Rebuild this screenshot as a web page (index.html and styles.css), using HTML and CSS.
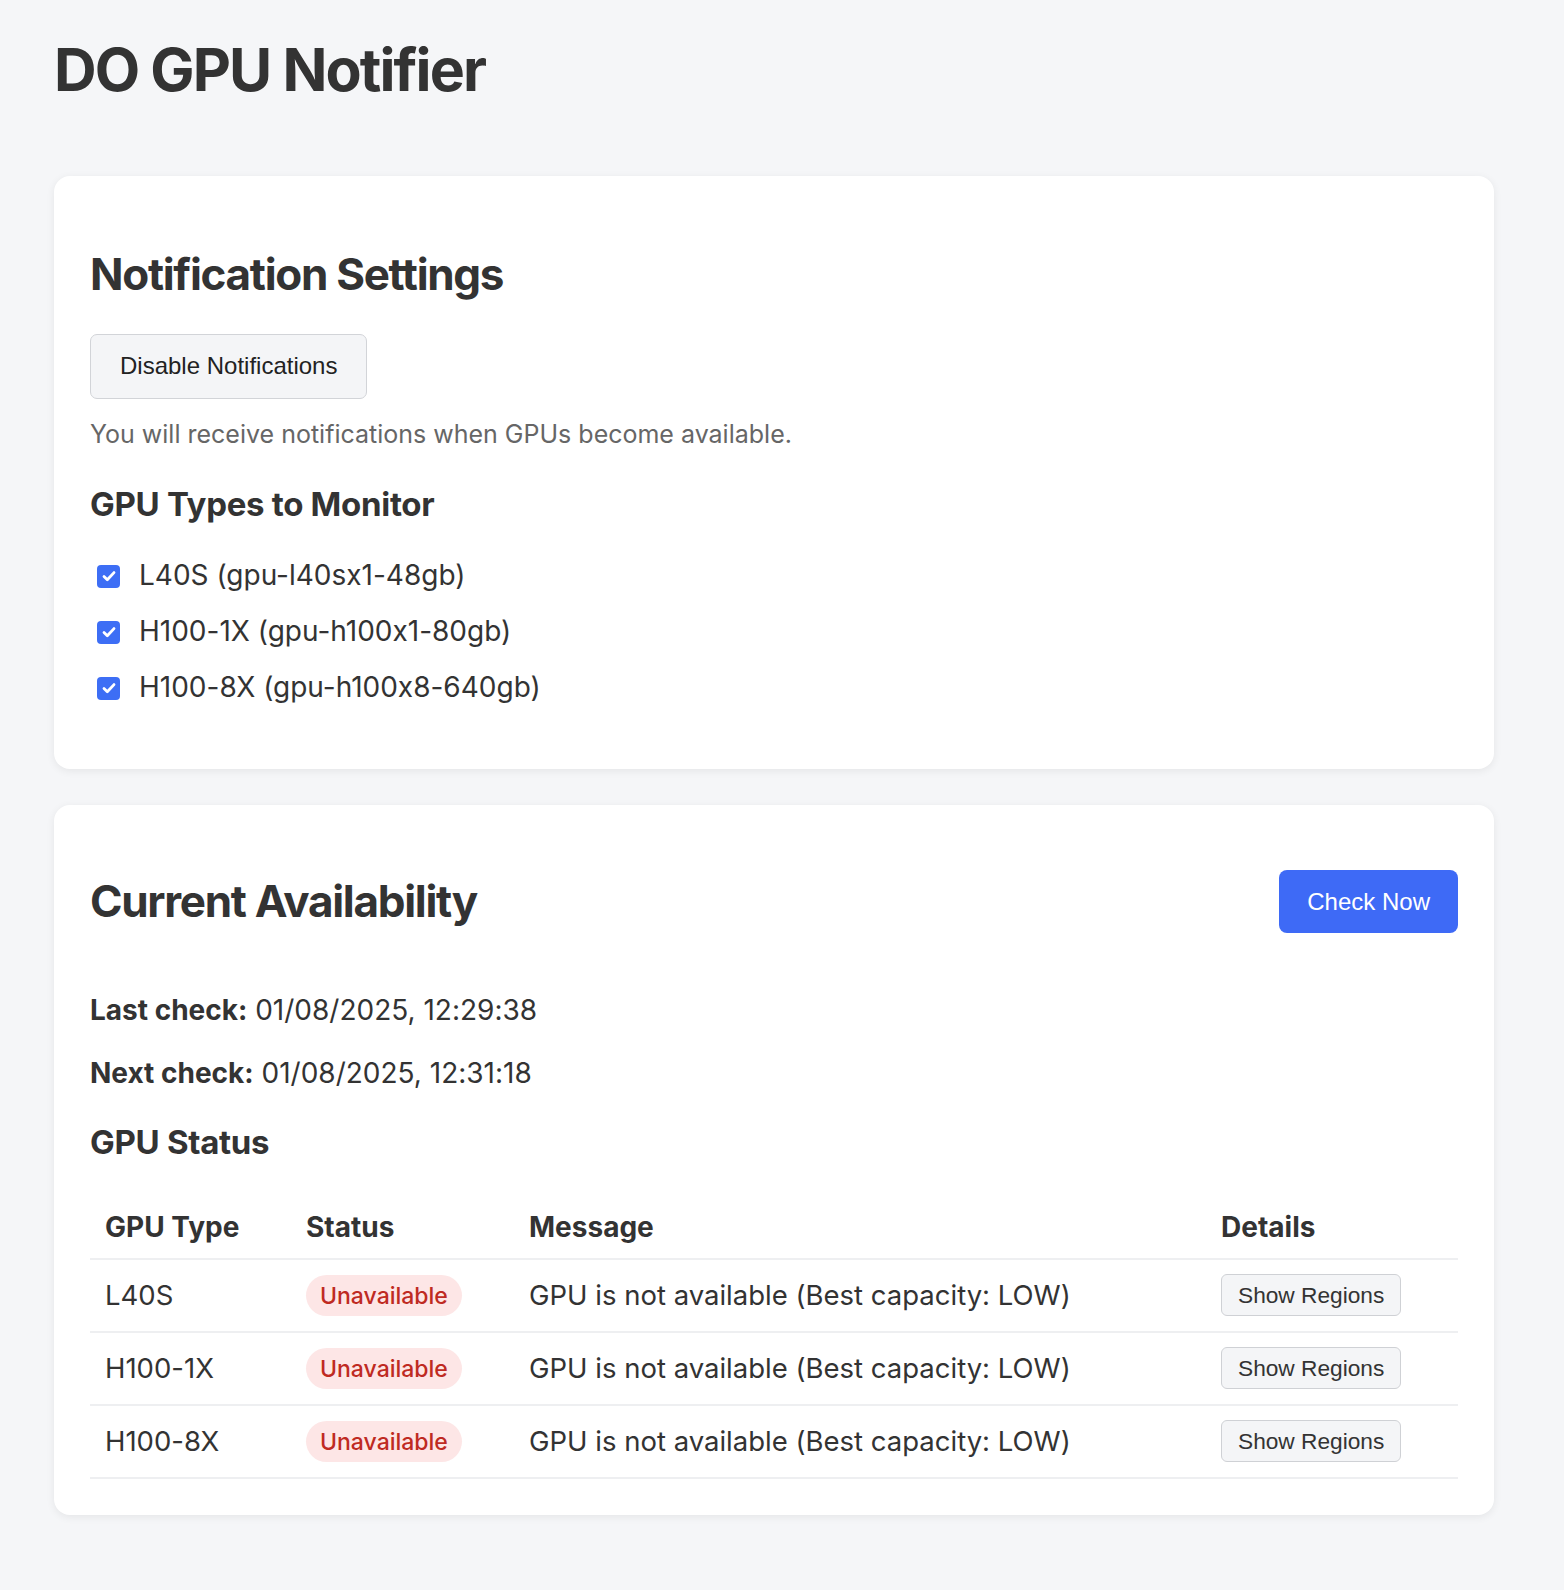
FILE: index.html
```html
<!DOCTYPE html>
<html lang="en">
<head>
<meta charset="utf-8">
<title>DO GPU Notifier</title>
<link rel="stylesheet" href="styles.css">
</head>
<body>
<div class="page">
  <h1 class="title">DO GPU Notifier</h1>

  <section class="card card-settings">
    <h2 class="card-title first">Notification Settings</h2>
    <button class="btn btn-secondary">Disable Notifications</button>
    <p class="hint">You will receive notifications when GPUs become available.</p>
    <h3 class="sub-title">GPU Types to Monitor</h3>
    <ul class="check-list">
      <li class="check-row">
        <span class="checkbox"><svg viewBox="0 0 22 22" width="22" height="22"><path d="M6 11.5l3.3 3.3L16 7.6" fill="none" stroke="#fff" stroke-width="2.8" stroke-linecap="round" stroke-linejoin="round"/></svg></span>
        <span class="check-label">L40S (gpu-l40sx1-48gb)</span>
      </li>
      <li class="check-row">
        <span class="checkbox"><svg viewBox="0 0 22 22" width="22" height="22"><path d="M6 11.5l3.3 3.3L16 7.6" fill="none" stroke="#fff" stroke-width="2.8" stroke-linecap="round" stroke-linejoin="round"/></svg></span>
        <span class="check-label">H100-1X (gpu-h100x1-80gb)</span>
      </li>
      <li class="check-row">
        <span class="checkbox"><svg viewBox="0 0 22 22" width="22" height="22"><path d="M6 11.5l3.3 3.3L16 7.6" fill="none" stroke="#fff" stroke-width="2.8" stroke-linecap="round" stroke-linejoin="round"/></svg></span>
        <span class="check-label">H100-8X (gpu-h100x8-640gb)</span>
      </li>
    </ul>
  </section>

  <section class="card card-availability">
    <div class="card-header">
      <h2 class="card-title">Current Availability</h2>
      <button class="btn btn-primary">Check Now</button>
    </div>
    <p class="meta meta-last"><strong>Last check:</strong> 01/08/2025, 12:29:38</p>
    <p class="meta meta-next"><strong>Next check:</strong> 01/08/2025, 12:31:18</p>
    <h3 class="sub-title status-title">GPU Status</h3>
    <table class="status-table">
      <colgroup>
        <col class="col-type">
        <col class="col-status">
        <col class="col-message">
        <col class="col-details">
      </colgroup>
      <thead>
        <tr><th>GPU Type</th><th>Status</th><th>Message</th><th>Details</th></tr>
      </thead>
      <tbody>
        <tr>
          <td>L40S</td>
          <td><span class="badge">Unavailable</span></td>
          <td>GPU is not available (Best capacity: LOW)</td>
          <td><button class="btn btn-small">Show Regions</button></td>
        </tr>
        <tr>
          <td>H100-1X</td>
          <td><span class="badge">Unavailable</span></td>
          <td>GPU is not available (Best capacity: LOW)</td>
          <td><button class="btn btn-small">Show Regions</button></td>
        </tr>
        <tr>
          <td>H100-8X</td>
          <td><span class="badge">Unavailable</span></td>
          <td>GPU is not available (Best capacity: LOW)</td>
          <td><button class="btn btn-small">Show Regions</button></td>
        </tr>
      </tbody>
    </table>
  </section>
</div>
</body>
</html>
```

FILE: styles.css
```css
* { box-sizing: border-box; }

html, body {
  margin: 0;
  padding: 0;
}

body {
  background: #f5f6f8;
  color: #333;
  font-family: Inter, "Noto Sans", "DejaVu Sans", sans-serif;
  font-feature-settings: "calt" 0;
  line-height: 1.2;
}

.page {
  width: 1440px;
  margin-left: 54px;
  padding-top: 35px;
  padding-bottom: 75px;
}

.title {
  margin: 0 0 70px;
  font-size: 59px;
  font-weight: 700;
  letter-spacing: -1.9px;
}

.card {
  background: #fff;
  border-radius: 16px;
  box-shadow: 0 2px 8px rgba(0, 0, 0, 0.07);
  padding: 36px;
  margin-bottom: 36px;
}

.card-title {
  margin: 0;
  font-size: 44px;
  font-weight: 700;
  letter-spacing: -1.3px;
}

.card-title.first {
  margin-top: 36px;
  margin-bottom: 33px;
}

.btn {
  font-family: "Liberation Sans", Arial, sans-serif;
  cursor: pointer;
  display: inline-flex;
  align-items: center;
  justify-content: center;
}

.btn-secondary {
  height: 65px;
  padding: 0 29px;
  font-size: 24px;
  color: #222;
  background: #f4f5f7;
  border: 1px solid #d2d4d8;
  border-radius: 7px;
}

.btn-primary {
  height: 63px;
  padding: 0 28px;
  font-size: 24px;
  color: #fff;
  background: #3e6af6;
  border: none;
  border-radius: 8px;
}

.btn-small {
  height: 42px;
  padding: 0 16px;
  font-size: 22.7px;
  color: #333;
  background: #f4f5f7;
  border: 1px solid #cfd1d5;
  border-radius: 6px;
}

.hint {
  margin: 20px 0 0;
  font-size: 25px;
  color: #666;
}

.sub-title {
  margin: 36px 0 0;
  font-size: 33px;
  font-weight: 700;
  letter-spacing: -0.3px;
}

.check-list {
  list-style: none;
  margin: 24px 0 17px;
  padding: 0;
}

.check-row {
  display: flex;
  align-items: center;
  height: 56px;
}

.checkbox {
  width: 23px;
  height: 23px;
  margin-left: 7px;
  margin-right: 19px;
  border-radius: 4px;
  background: #3d6ef5;
  display: inline-flex;
  align-items: center;
  justify-content: center;
}

.check-label {
  font-size: 28px;
  color: #333;
}

.card-header {
  display: flex;
  align-items: center;
  justify-content: space-between;
  margin-top: 29px;
}

.meta {
  margin: 0;
  font-size: 28px;
  color: #333;
}

.meta-last {
  margin-top: 61px;
}

.meta-next {
  margin-top: 29px;
}

.status-title {
  margin-top: 33px;
}

.status-table {
  width: 100%;
  margin-top: 48px;
  border-collapse: collapse;
  table-layout: fixed;
}

.col-type { width: 201px; }
.col-status { width: 223px; }
.col-message { width: 692px; }
.col-details { width: 252px; }

.status-table th {
  text-align: left;
  font-size: 28px;
  font-weight: 700;
  padding: 0 15px 13px;
  border-bottom: 2px solid #eeeff1;
}

.status-table td {
  height: 73px;
  padding: 0 15px;
  font-size: 27.5px;
  border-bottom: 2px solid #eeeff1;
  vertical-align: middle;
}

.badge {
  display: inline-flex;
  align-items: center;
  height: 41px;
  padding: 3px 14px 0;
  border-radius: 21px;
  background: #fde6e6;
  color: #bf2a22;
  font-size: 23px;
  font-weight: 500;
}
```
